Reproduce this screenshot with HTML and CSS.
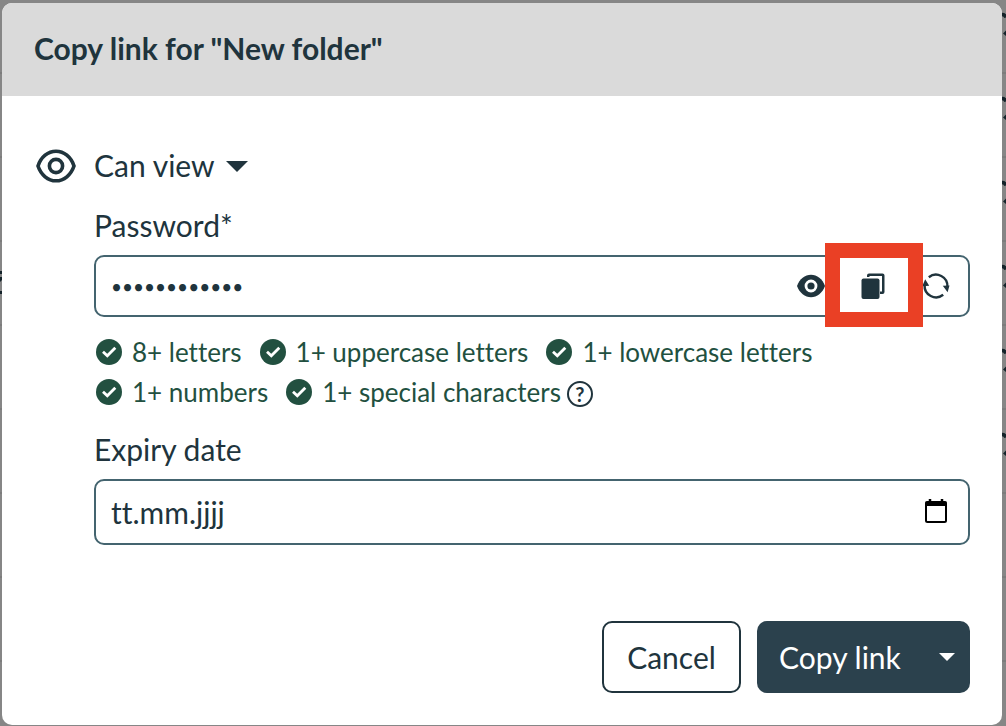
FILE: index.html
```html
<!DOCTYPE html>
<html lang="en">
<head>
<meta charset="utf-8">
<meta name="viewport" content="width=device-width, initial-scale=1">
<title>Copy link</title>
<link rel="stylesheet" href="styles.css">
</head>
<body>
<svg class="defs" aria-hidden="true">
  <symbol id="check" viewBox="0 0 26 26"><circle cx="13" cy="13" r="13" fill="currentColor"/><path d="M7 12.800 11.300 16.800 19.300 8.800" fill="none" stroke="#fff" stroke-width="2.800"/></symbol>
  <symbol id="more" viewBox="0 0 4 24"><path d="M0 2.500Q3 2.500 4 5.500" fill="none" stroke="#14232a" stroke-width="3.500"/><path d="M4 18.500 1 21.500 4 24z" fill="#14232a"/></symbol>
</svg>
<div class="rows-right" aria-hidden="true">
  <svg><use href="#more"/></svg><svg><use href="#more"/></svg><svg><use href="#more"/></svg><svg><use href="#more"/></svg><svg><use href="#more"/></svg><svg><use href="#more"/></svg>
</div>
<svg class="row-left" viewBox="0 0 2 24" aria-hidden="true"><path d="M0 0h2v3H0zM0 6h2v3l-2 2zM0 20h2v3H0z" fill="#14232a"/></svg>

<form class="modal" role="dialog" aria-labelledby="title">
  <header class="modal-header"><h1 id="title">Copy link for "New folder"</h1></header>
  <div class="modal-body">
    <svg class="view-icon" viewBox="0 0 40 34" fill="none" stroke="currentColor" aria-hidden="true"><path d="M2 17C5 8 12 2.200 20 2.200S35 8 38 17C35 26 28 31.800 20 31.800S5 26 2 17z" stroke-width="3.600"/><circle cx="20" cy="17" r="6.600" stroke-width="3.600"/></svg>
    <div class="fields">
      <button type="button" class="permission">Can view <svg class="caret" viewBox="0 0 22 11" aria-hidden="true"><path d="M0 0h22L11 11z" fill="currentColor"/></svg></button>

      <label for="password">Password*</label>
      <div class="field">
        <input id="password" class="password" type="password" value="abcdEFGH12!?">
        <button type="button" class="tool" aria-label="Show password"><svg viewBox="0 0 30 30"><path d="M1 15C3.500 8 9 3.800 15 3.800S26.500 8 29 15C26.500 22 21 26.200 15 26.200S3.500 22 1 15z" fill="currentColor"/><circle cx="15" cy="15" r="5" fill="currentColor" stroke="#fff" stroke-width="2.800"/></svg></button>
        <button type="button" class="tool" aria-label="Copy password"><svg viewBox="0 0 30 30"><path d="M9 6V4.500q0-2 2-2h13.500q2 0 2 2V21q0 2-2 2H22v-2.500h2V5H11.500v1z" fill="currentColor"/><rect x="3.500" y="7.500" width="18" height="20.500" rx="2" fill="currentColor"/></svg></button>
        <button type="button" class="tool" aria-label="Generate password"><svg viewBox="0 0 30 30" fill="none" stroke="currentColor" stroke-width="2.400"><path d="M8.800 6.200A11.500 11.500 0 0 1 27.400 16M23.200 23.800A11.500 11.500 0 0 1 4.600 14"/><path d="M22.800 14.800 29.500 14.500 27.600 21.300zM2.200 15.200 5.200 8.300 9.200 14.800z" fill="currentColor" stroke="none"/></svg></button>
        <span class="highlight" aria-hidden="true"></span>
      </div>
      <ul class="rules">
        <li><svg><use href="#check"/></svg>8+ letters</li>
        <li><svg><use href="#check"/></svg>1+ uppercase letters</li>
        <li><svg><use href="#check"/></svg>1+ lowercase letters</li>
        <li><svg><use href="#check"/></svg>1+ numbers</li>
        <li><svg><use href="#check"/></svg>1+ special characters<button type="button" class="help" aria-label="Help">?</button></li>
      </ul>

      <label for="expiry">Expiry date</label>
      <div class="field date">
        <input id="expiry" type="text" placeholder="tt.mm.jjjj">
        <button type="button" class="tool calendar" aria-label="Open calendar"><svg viewBox="0 0 30 30"><path d="M10 2v3M22 2v3" stroke="currentColor" stroke-width="2.500"/><rect x="6" y="5" width="20" height="20" rx="1.500" fill="none" stroke="currentColor" stroke-width="2"/><path d="M5.500 4.500h21V9h-21z" fill="currentColor"/></svg></button>
      </div>
    </div>
  </div>
  <footer class="actions">
    <button type="button" class="cancel">Cancel</button>
    <div class="split">
      <button type="submit" class="copy">Copy link</button>
      <button type="button" class="more" aria-label="More copy options"><svg viewBox="0 0 16 8" aria-hidden="true"><path d="M0 0h16L8 8z" fill="currentColor"/></svg></button>
    </div>
  </footer>
</form>
</body>
</html>
```
FILE: styles.css
```css
* { box-sizing: border-box; }
body {
  margin: 0;
  min-height: 100vh;
  padding: 3px 4px 1px 2px;
  display: flex;
  background: repeating-linear-gradient(#868686 0 72px, #7c7c7c 72px 74px, #868686 74px 84px);
  color: #20343d;
  font: 30px/36px Lato, "Open Sans", sans-serif;
  font-variant-ligatures: none;
}
button, input { font: inherit; font-variant-ligatures: none; color: inherit; background: none; border: 0; padding: 0; margin: 0; }
button { cursor: pointer; }
svg { display: block; flex: none; }
.defs { position: absolute; width: 0; height: 0; }
.rows-right { position: absolute; top: 12px; right: 0; display: grid; gap: 60px; }
.rows-right svg { width: 4px; height: 24px; }
.row-left { position: absolute; left: 0; top: 271px; width: 2px; height: 24px; }

.modal {
  position: relative;
  flex: 1;
  display: flex;
  flex-direction: column;
  background: #fff;
  border-radius: 10px;
  overflow: hidden;
}
.modal-header { padding: 27px 32px 30px; background: #dadada; }
h1 { margin: 0; font-size: 30px; line-height: 36px; font-weight: 700; }
.modal-body { display: flex; gap: 18px; padding: 51px 32px 0; }
.view-icon { width: 40px; height: 34px; margin: 2px 0 0 2px; }
.fields { flex: 1; min-width: 0; display: flex; flex-direction: column; }
.permission { display: flex; align-items: center; gap: 11px; align-self: flex-start; margin-bottom: 24px; }
.caret { width: 22px; height: 11px; margin-top: 2px; }
label { align-self: flex-start; margin-bottom: 12px; }
.field {
  position: relative;
  display: flex;
  align-items: center;
  gap: 32px;
  height: 62px;
  padding: 0 18px 0 15px;
  border: 2px solid #44646f;
  border-radius: 10px;
}
.field input { flex: 1; min-width: 0; height: 100%; outline: 0; }
.field input::placeholder { color: inherit; opacity: 1; }
.field .password { font-size: 19px; }
.date { height: 66px; }
.tool, .tool svg { width: 30px; height: 30px; }
.calendar { color: #000; }
.highlight {
  position: absolute;
  top: -14px;
  right: 45px;
  width: 98px;
  height: 84px;
  border: 15px solid #ea4025;
  pointer-events: none;
}
.rules {
  display: flex;
  flex-wrap: wrap;
  gap: 4px 18px;
  margin: 17px 0 21px;
  padding: 0 0 0 2px;
  list-style: none;
  color: #225040;
  font-size: 26px;
}
.rules li { display: flex; align-items: center; }
.rules svg { width: 26px; height: 26px; margin-right: 10px; }
.help {
  width: 26px;
  height: 26px;
  margin: 4px 0 0 6px;
  border: 2px solid #20343d;
  border-radius: 50%;
  color: #20343d;
  font-size: 20px;
  line-height: 20px;
  font-weight: 700;
}
.actions { display: flex; justify-content: flex-end; gap: 16px; margin-top: auto; padding: 32px; }
.cancel { min-width: 139px; height: 72px; padding: 0 20px; border: 2px solid #20343d; border-radius: 10px; }
.split { display: flex; height: 72px; background: #2b414d; color: #fff; border-radius: 10px; }
.copy { padding: 0 22px; min-width: 166px; text-align: left; }
.more { width: 47px; display: grid; place-items: center; }
.more svg { width: 16px; height: 8px; }
```
